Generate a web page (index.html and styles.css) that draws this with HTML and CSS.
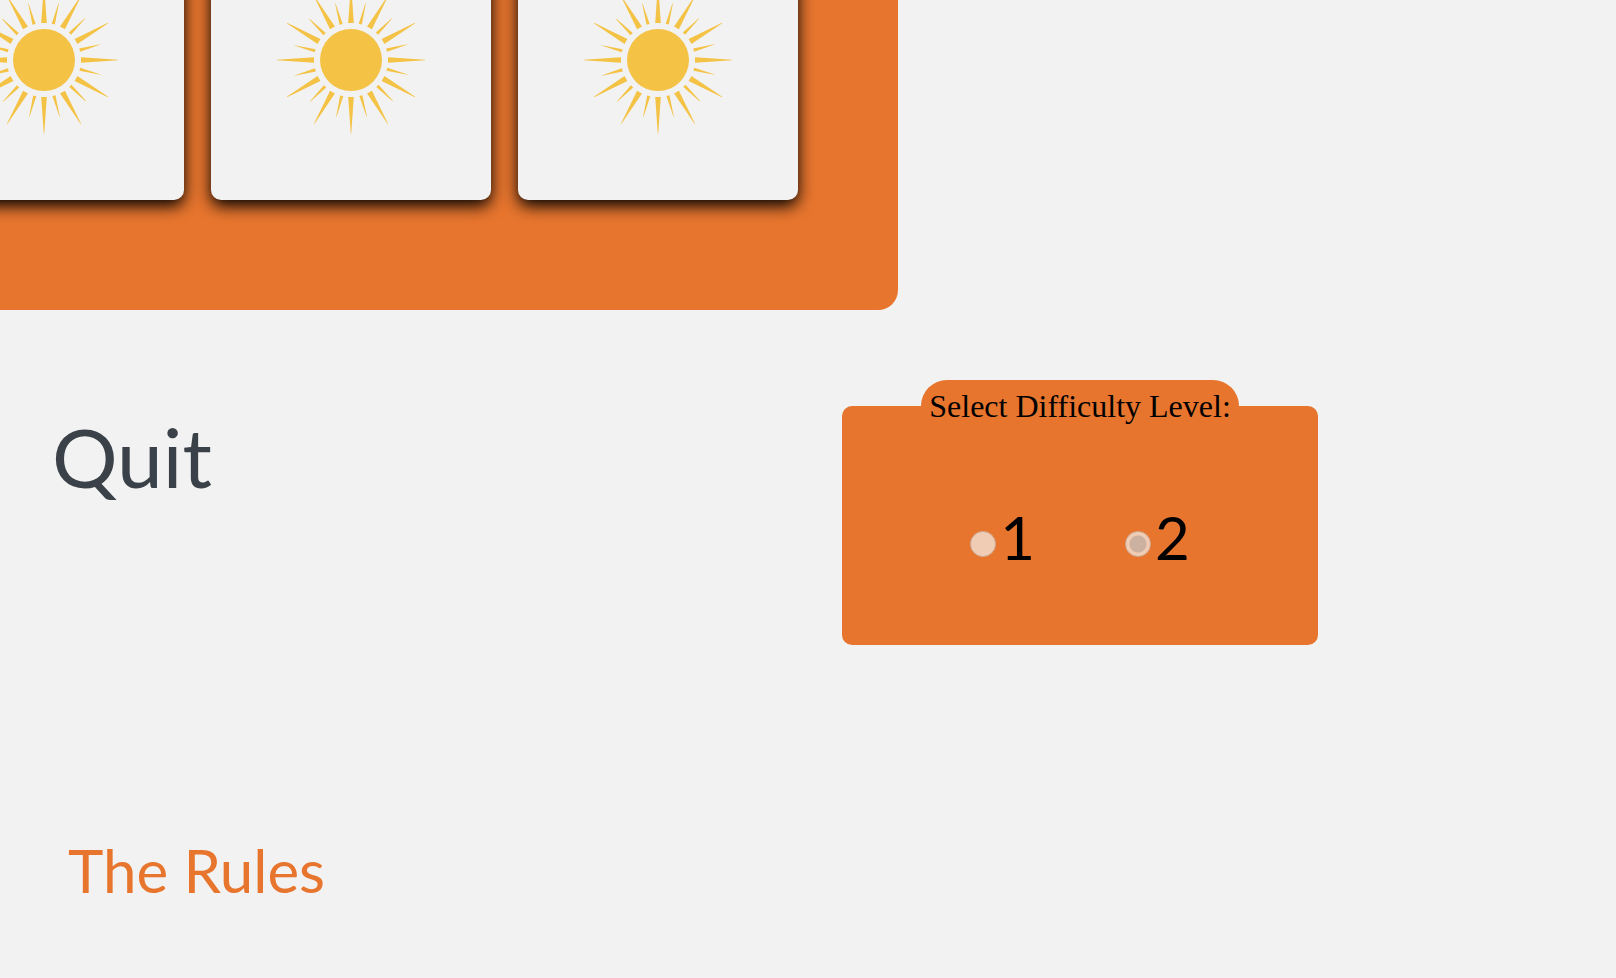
FILE: index.html
```html
<!DOCTYPE html>
<html lang="en">
<head>
<meta charset="utf-8">
<title>Memory Game</title>
<link rel="stylesheet" href="styles.css">
</head>
<body>
<svg class="defs" width="0" height="0" aria-hidden="true">
  <defs>
    <path id="long" d="M-2.8-37H2.8L.2-74H-.2Z"/>
    <path id="short" d="M-1.6-37H1.6L.2-58.500H-.2Z"/>
    <g id="quarter">
      <use href="#long"/>
      <use href="#short" transform="rotate(14.500)"/>
      <use href="#long" transform="rotate(30)"/>
      <use href="#short" transform="rotate(44.500)"/>
      <use href="#long" transform="rotate(60)"/>
      <use href="#short" transform="rotate(74.500)"/>
    </g>
    <g id="sun">
      <circle r="31"/>
      <use href="#quarter"/>
      <use href="#quarter" transform="rotate(90)"/>
      <use href="#quarter" transform="rotate(180)"/>
      <use href="#quarter" transform="rotate(270)"/>
    </g>
  </defs>
</svg>
<main>
  <section class="board" aria-label="Cards">
    <button class="card" aria-label="Card 1"><svg class="sun" viewBox="-75 -75 150 150"><use href="#sun"/></svg></button>
    <button class="card" aria-label="Card 2"><svg class="sun" viewBox="-75 -75 150 150"><use href="#sun"/></svg></button>
    <button class="card" aria-label="Card 3"><svg class="sun" viewBox="-75 -75 150 150"><use href="#sun"/></svg></button>
  </section>
  <section class="controls">
    <button class="quit">Quit</button>
    <fieldset class="difficulty">
      <legend class="legend">Select Difficulty Level:</legend>
      <div class="options">
        <label class="option" for="level1"><input class="radio" type="radio" id="level1" name="level" disabled>1</label>
        <label class="option" for="level2"><input class="radio" type="radio" id="level2" name="level" disabled checked>2</label>
      </div>
    </fieldset>
  </section>
  <h2 class="rules">The Rules</h2>
</main>
</body>
</html>
```
FILE: styles.css
```css
body {
  margin: 0;
  background: #f2f2f2;
  color: #000;
  font-family: "Liberation Serif", serif;
  overflow: hidden;
}

.defs {
  position: absolute;
}

.board {
  display: flex;
  justify-content: flex-end;
  gap: 27px;
  box-sizing: border-box;
  width: 56%;
  max-width: 898px;
  margin-top: -80px;
  padding: 0 100px 110px 0;
  border-radius: 0 0 20px 0;
  background: #e7752e;
}

.card {
  display: flex;
  flex: none;
  align-items: center;
  justify-content: center;
  width: 280px;
  height: 280px;
  padding: 0;
  border: 0;
  border-radius: 10px;
  background: #f2f2f2;
  box-shadow: 0 6px 16px #000;
}

.sun {
  width: 150px;
  height: 150px;
  fill: #f4c244;
}

.controls {
  display: flex;
  justify-content: space-between;
  align-items: flex-start;
  padding: 70px 298px 0 52px;
}

.quit {
  margin-top: 28px;
  padding: 0;
  border: 0;
  background: none;
  color: #3b4148;
  font-family: Lato, sans-serif;
  font-size: 82px;
  line-height: 96px;
}

.difficulty {
  box-sizing: border-box;
  width: 476px;
  margin: 0;
  padding: 69px 0 71px;
  border: 0;
  border-radius: 10px;
  background: #e7752e;
}

.legend {
  margin: 0 auto;
  padding: 8px;
  border-radius: 26px 26px 0 0;
  background: #e7752e;
  font-size: 32px;
  line-height: 36px;
}

.options {
  display: flex;
  justify-content: center;
  gap: 90px;
}

.option {
  font-family: Lato, sans-serif;
  font-size: 60px;
  line-height: 73px;
}

.radio {
  appearance: none;
  box-sizing: border-box;
  width: 26px;
  height: 26px;
  margin: 0 4px 3px 0;
  border: 1px solid #ceab96;
  border-radius: 50%;
  background: #f0ccb4;
  vertical-align: baseline;
}

.radio:checked {
  background: radial-gradient(circle, #ccb0a0 8px, #f0ccb4 9px);
}

.rules {
  margin: 189px 0 0 68px;
  color: #e7752e;
  font-family: Lato, sans-serif;
  font-size: 60px;
  font-weight: 400;
  line-height: 72px;
}
```
